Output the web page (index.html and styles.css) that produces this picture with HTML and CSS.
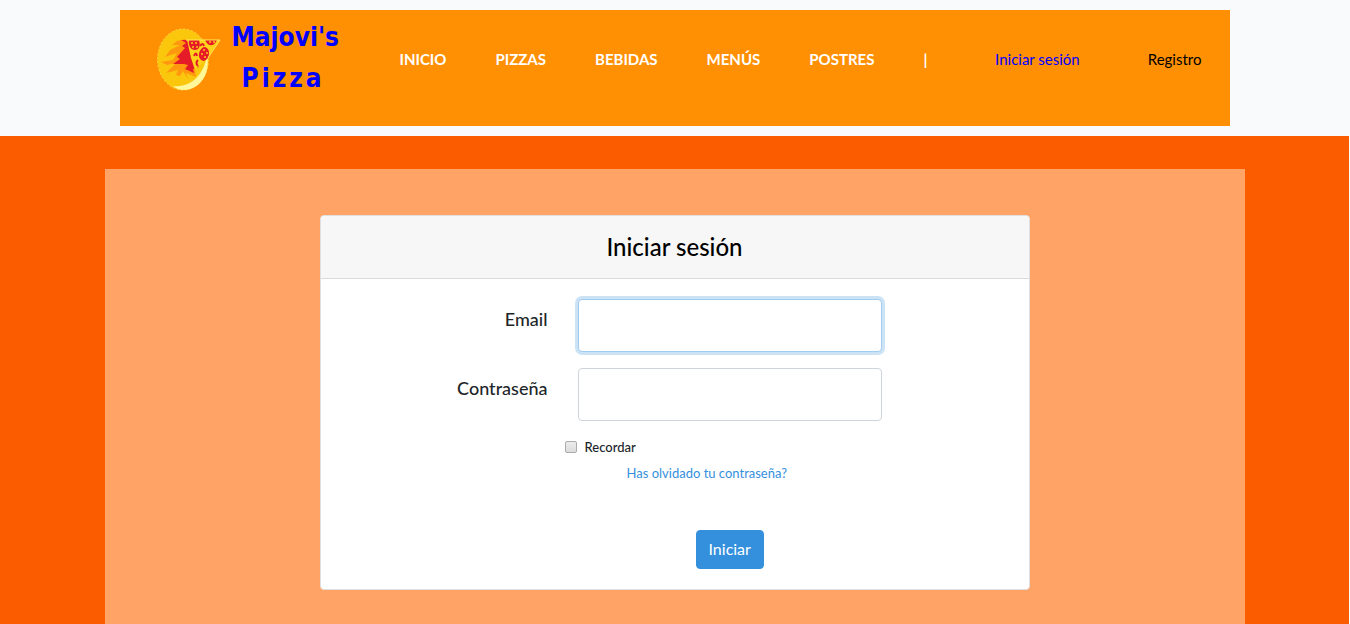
FILE: index.html
```html
<!DOCTYPE html>
<html lang="es">
<head>
<meta charset="utf-8">
<meta name="viewport" content="width=device-width, initial-scale=1">
<title>Majovi's Pizza</title>
<link rel="stylesheet" href="styles.css">
</head>
<body>
<header class="site-header">
  <nav class="navbar">
    <a class="brand" href="#">
      <svg class="brand-icon" viewBox="0 0 80 80" aria-hidden="true">
        <ellipse cx="33" cy="39.500" rx="25.500" ry="30.500" fill="#fbc70d"/>
        <ellipse cx="33" cy="39.500" rx="25.500" ry="30.500" fill="none" stroke="#ffd84a" stroke-dasharray="2 2"/>
        <path d="M23 66C42 68 54 54 57 35C61 53 50 70 34 70C29 70 25 68 23 66Z" fill="#fff799"/>
        <path d="M36 19L27 21L22 25L30 25L20 30L15 37L27 33L23 40L11 42L17 45L26 43L20 49L16 53L28 50L26 55L30 56L33 51L38 59L36 53L46 57L45 49Z" fill="#ff980e"/>
        <path d="M38 20L31 20L36 23L32 26L35 28L27 37L30 39L23 44L34 44L38 45L35 49L44 53L43 49L49 47Z" fill="#e51c27"/>
        <path d="M37 19.500L70 20L58 37L45 50L41 38Z" fill="#ffd31b"/>
        <g fill="#e51c27">
          <path d="M39 20H49C51 26 49 30 45 30C41 30 38 26 39 20Z"/>
          <path d="M55 20H67C64 27 58 27 55 20Z"/>
          <ellipse cx="54" cy="34" rx="5" ry="7" transform="rotate(12 54 34)"/>
        </g>
        <path d="M50 26Q53 22 54 26M44 36Q46 31 47 36M48 46Q45 43 48 40" fill="none" stroke="#e51c27" stroke-width="2"/>
        <path d="M36 20H70L58 38" fill="none" stroke="#ffe75a" stroke-width="1"/>
        <g fill="#ffc51a">
          <circle cx="42" cy="23" r="1"/><circle cx="46" cy="23" r="1"/><circle cx="43" cy="27" r="1"/><circle cx="47" cy="27" r="1"/>
          <circle cx="60" cy="22" r="1"/><circle cx="64" cy="22" r="1"/>
          <circle cx="54" cy="30" r="1"/><circle cx="57" cy="33" r="1"/><circle cx="52" cy="34" r="1"/><circle cx="55" cy="37" r="1"/>
        </g>
      </svg>
      <span class="brand-name"><span>Majovi's</span><span class="brand-second">Pizza</span></span>
    </a>
    <div class="menu">
      <a href="#">INICIO</a>
      <a href="#">PIZZAS</a>
      <a href="#">BEBIDAS</a>
      <a href="#">MENÚS</a>
      <a href="#">POSTRES</a>
      <span>|</span>
    </div>
    <div class="account">
      <a class="current" href="#">Iniciar sesión</a>
      <a href="#">Registro</a>
    </div>
  </nav>
</header>
<main class="page">
  <div class="container">
    <section class="card">
      <h1 class="card-header">Iniciar sesión</h1>
      <form class="card-body">
        <div class="row">
          <label for="email">Email</label>
          <input class="field" id="email" type="email" autofocus>
        </div>
        <div class="row">
          <label for="password">Contraseña</label>
          <input class="field" id="password" type="password">
        </div>
        <div class="options">
          <div class="remember">
            <input type="checkbox" id="remember">
            <label for="remember">Recordar</label>
          </div>
          <a class="forgot" href="#">Has olvidado tu contraseña?</a>
          <button class="submit" type="button">Iniciar</button>
        </div>
      </form>
    </section>
  </div>
</main>
</body>
</html>
```
FILE: styles.css
```css
*, *::before, *::after { box-sizing: border-box; }
html { height: 100%; }
body {
  display: flex;
  flex-direction: column;
  min-height: 100%;
  margin: 0;
  border-right: 1px solid #f8fafc;
  background: #f8fafc;
  font-family: Lato, "Open Sans", sans-serif;
  font-size: 15px;
  color: #212529;
}
a { color: inherit; text-decoration: none; }

.site-header { padding: 10px 15px; }
.navbar {
  display: flex;
  align-items: flex-start;
  max-width: 1110px;
  min-height: 116px;
  margin: 0 auto;
  padding: 10px 28px 10px 30px;
  background: #ff9003;
}
.brand { display: flex; gap: 2px; }
.brand-icon { width: 80px; height: 80px; flex: none; }
.brand-name {
  display: flex;
  flex-direction: column;
  width: 110px;
  margin-top: -3px;
  color: #00f;
  font-family: "DejaVu Sans Condensed", "DejaVu Sans", sans-serif;
  font-stretch: condensed;
  font-size: 26px;
  font-weight: 700;
  line-height: 41px;
}
.brand-second { padding-left: 10px; letter-spacing: 3px; }
.menu {
  display: flex;
  gap: 49px;
  margin-left: 58px;
  padding-top: 27px;
  line-height: 24px;
  font-weight: 700;
  color: #fff;
}
.account {
  display: flex;
  gap: 68px;
  margin-left: auto;
  padding-top: 27px;
  line-height: 24px;
  font-weight: 400;
  color: #000;
}
.account .current { color: #00f; }

.page { flex: 1; padding-top: 33px; background: #fb5c00; display: flex; justify-content: center; }
.container { width: 100%; max-width: 1140px; padding: 46px 15px 34px; background: #ffa366; }
.card {
  max-width: 710px;
  margin: 0 auto;
  border: 1px solid #dfdfdf;
  border-radius: 4px;
  background: #fff;
}
.card-header {
  margin: 0;
  padding: 16px;
  border-bottom: 1px solid #dbdbdb;
  border-radius: 3px 3px 0 0;
  background: #f7f7f7;
  color: #000;
  font-size: 24px;
  line-height: 30px;
  font-weight: 500;
  text-align: center;
}
.card-body { padding: 20px; }
.row { display: grid; grid-template-columns: 207px 304px; column-gap: 30px; margin-bottom: 16px; }
.row label { padding-top: 7px; font-size: 18px; font-weight: 500; line-height: 27px; text-align: right; }
.field {
  width: 100%;
  height: 53px;
  padding: 6px 12px;
  border: 1px solid #ced4da;
  border-radius: 4px;
  background: #fff;
  font: inherit;
}
.field:focus { border-color: #a1cbef; outline: 0; box-shadow: 0 0 0 3px #cce3f6; }
.options { display: flex; flex-direction: column; align-items: flex-start; padding-left: 224px; }
.remember { display: flex; align-items: center; gap: 8px; height: 20px; font-size: 13px; font-weight: 500; }
.remember input {
  appearance: none;
  width: 12px;
  height: 12px;
  margin: 0;
  border: 1px solid #ababab;
  border-radius: 2px;
  background: linear-gradient(#ececec, #dcdcdc);
}
.forgot { margin: 6px 0 0 62px; font-size: 13px; line-height: 20px; color: #3490dc; }
.submit {
  margin: 47px 0 0 131px;
  padding: 6px 12px 8px;
  border: 1px solid #3490dc;
  border-radius: 4px;
  background: #3490dc;
  color: #fff;
  font-family: inherit;
  font-size: 16px;
  line-height: 23px;
}
```
